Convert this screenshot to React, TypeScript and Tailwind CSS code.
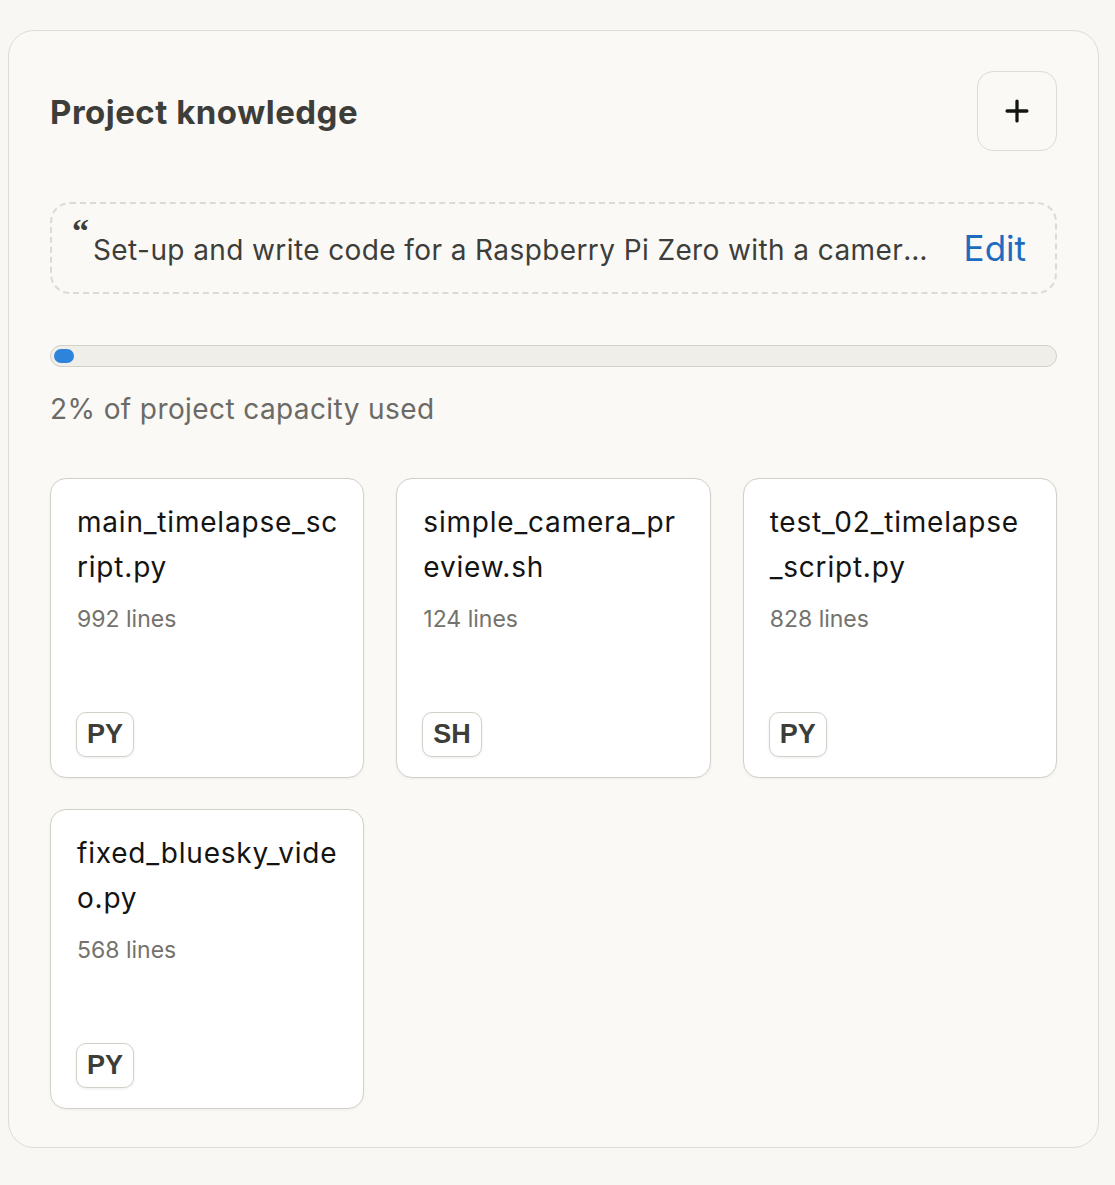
import React from 'react';
import { Plus } from 'lucide-react';

const FILES = [
  { name: 'main_timelapse_script.py', lines: 992, ext: 'PY' },
  { name: 'simple_camera_preview.sh', lines: 124, ext: 'SH' },
  { name: 'test_02_timelapse_script.py', lines: 828, ext: 'PY' },
  { name: 'fixed_bluesky_video.py', lines: 568, ext: 'PY' },
];

const FileCard: React.FC<{ name: string; lines: number; ext: string }> = ({ name, lines, ext }) => (
  <div className="h-[300px] bg-white rounded-[16px] border border-[#d3d0c9] shadow-[0_1px_3px_rgba(0,0,0,0.05)] flex flex-col justify-between pl-[26px] pr-[25px] pt-[21px] pb-[20px]">
    <div>
      <p className="text-[28px] leading-[45px] tracking-[0.8px] text-[#141413] break-all">{name}</p>
      <p className="mt-[13px] text-[23px] leading-[32px] text-[#73726c]">{lines} lines</p>
    </div>
    <span className="self-start -ml-[1px] h-[45px] px-[10px] flex items-center rounded-[10px] border border-[#d3d0c9] bg-white shadow-[0_1px_3px_rgba(0,0,0,0.08)] text-[27px] font-bold text-[#3d3d3a] font-['Liberation_Sans',sans-serif]">
      {ext}
    </span>
  </div>
);

export default function App() {
  return (
    <div className="min-h-[1185px] bg-[#f8f7f3] pt-[30px] pl-[8px] pr-[16px] font-['Inter',sans-serif]">
      <section className="bg-[#faf9f5] border border-[#dedcd5] rounded-[26px] px-[41px] pt-[40px] pb-[38px]">

        {/* Header */}
        <div className="flex items-center justify-between">
          <h2 className="text-[33px] font-bold text-[#3d3d3a] tracking-[0.5px] pt-[4px]">Project knowledge</h2>
          <button className="w-[80px] h-[80px] rounded-[16px] border border-[#dedcd5] flex items-center justify-center text-[#141413]">
            <Plus size={34} strokeWidth={2.3} />
          </button>
        </div>

        {/* Instructions */}
        <div className="mt-[51px] h-[92px] rounded-[20px] border-2 border-dashed border-[#dddad3] flex items-center pl-[20px] pr-[29px] gap-[28px]">
          <div className="flex-1 min-w-0 flex items-start">
            <span className="font-['Liberation_Serif',serif] font-bold text-[34px] leading-[20px] text-[#3d3d3a] -mt-[4px] mr-[4px]">“</span>
            <p className="truncate text-[28px] tracking-[0.4px] text-[#3d3d3a] pt-[4px]">
              Set-up and write code for a Raspberry Pi Zero with a camera module that takes timelapse photos
            </p>
          </div>
          <span className="text-[35px] text-[#1f6bbf]">Edit</span>
        </div>

        {/* Capacity */}
        <div className="mt-[51px] h-[22px] rounded-full bg-[#f0eee8] border border-[#d3d0c9] p-[3px]">
          <div className="h-full w-[20px] rounded-full bg-[#2c84db]" />
        </div>
        <p className="mt-[21px] text-[28px] tracking-[0.4px] text-[#6b6a66]">2% of project capacity used</p>

        {/* Files */}
        <div className="mt-[48px] grid grid-cols-3 gap-x-[32px] gap-y-[31px]">
          {FILES.map(f => <FileCard key={f.name} {...f} />)}
        </div>
      </section>
    </div>
  );
}
